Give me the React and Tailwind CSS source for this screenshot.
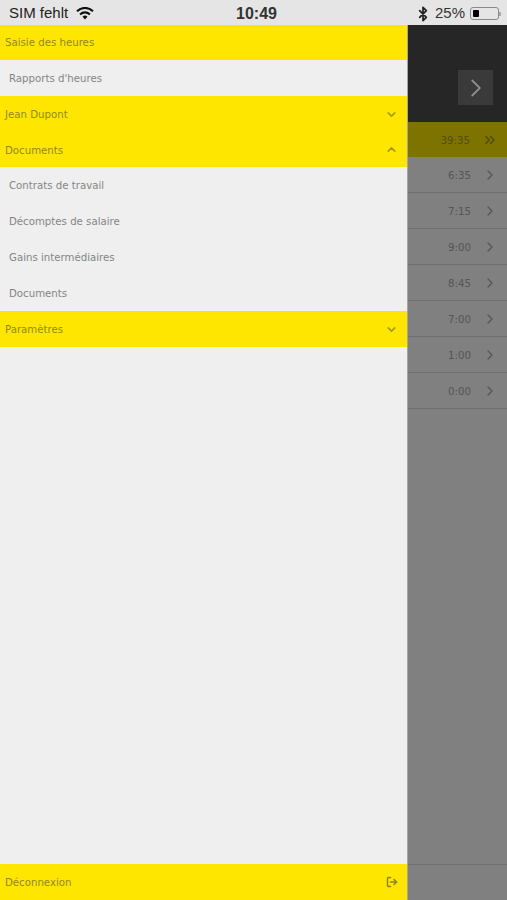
import { Bluetooth, ChevronDown, ChevronRight, ChevronUp, ChevronsRight, LogOut } from 'lucide-react';

const days = ['6:35', '7:15', '9:00', '8:45', '7:00', '1:00', '0:00'];

function MenuHeader({ label, open, closed, height = 'h-9', nudge = 'pt-[2px]' }) {
  return (
    <div className={`${height} flex items-center justify-between bg-[#ffe600] pl-[5px] pr-[9px] text-[#8f8a1e]`}>
      <span className={nudge}>{label}</span>
      {closed && <ChevronDown size={13} strokeWidth={2.8} className="text-[#a39a10]" />}
      {open && <ChevronUp size={13} strokeWidth={2.8} className="text-[#a39a10]" />}
    </div>
  );
}

function MenuItem({ label }) {
  return <div className="h-9 flex items-center pl-[9px] pt-[2px] text-[#858585]">{label}</div>;
}

function WifiIcon() {
  return (
    <svg width="18" height="13" viewBox="0 0 18 13" className="ml-[8px]">
      <path d="M9 12.6 6.5 9.8a3.6 3.6 0 0 1 5 0Z" fill="#111" />
      <path d="M4.1 7.4a7 7 0 0 1 9.8 0" fill="none" stroke="#111" strokeWidth="2.1" />
      <path d="M1 4.2a11.4 11.4 0 0 1 16 0" fill="none" stroke="#111" strokeWidth="2.1" />
    </svg>
  );
}

export default function App() {
  return (
    <div className="w-[507px] h-[900px] flex flex-col overflow-hidden font-['DejaVu_Sans',sans-serif] text-[10.2px] bg-[#808080]">
      {/* Status bar */}
      <div className="h-[25px] shrink-0 bg-[#e5e5e5] flex items-center justify-between pl-[9px] pr-[6px] pt-[2px] font-['Liberation_Sans',sans-serif] text-[15px] text-[#222] relative">
        <div className="flex items-center">
          <span>SIM fehlt</span>
          <WifiIcon />
        </div>
        <span className="absolute left-[236px] top-[4px] font-bold text-[16px] leading-[20px] text-[#333]">10:49</span>
        <div className="flex items-center">
          <Bluetooth size={16} strokeWidth={2.6} className="mr-[4px]" />
          <span className="mr-[5px] text-[#333]">25%</span>
          <div className="w-[29px] h-[13px] rounded-[3px] border border-[#8a8a8a] p-[2px]">
            <div className="w-[6px] h-full rounded-[1px] bg-black" />
          </div>
          <div className="w-[2px] h-[4px] bg-[#aaa]" />
        </div>
      </div>

      <div className="flex-1 flex min-h-0">
        {/* Drawer */}
        <div className="w-[407px] shrink-0 flex flex-col bg-[#efefef]">
          <MenuHeader label="Saisie des heures" height="h-[35px]" nudge="pt-0" />
          <MenuItem label="Rapports d'heures" />
          <MenuHeader label="Jean Dupont" closed />
          <MenuHeader label="Documents" open height="h-[35px]" />
          <MenuItem label="Contrats de travail" />
          <MenuItem label="Décomptes de salaire" />
          <MenuItem label="Gains intermédiaires" />
          <MenuItem label="Documents" />
          <MenuHeader label="Paramètres" closed />
          <div className="flex-1" />
          <div className="h-9 flex items-center justify-between bg-[#ffe600] pl-[5px] pr-[9px] text-[#8f8a1e]">
            <span className="pt-[2px]">Déconnexion</span>
            <LogOut size={12} strokeWidth={3} className="text-[#8a8320]" />
          </div>
        </div>

        {/* Dimmed page behind the drawer */}
        <div className="flex-1 flex flex-col border-l border-[#a5a5a5] text-[#555555]">
          <div className="h-[97px] shrink-0 bg-[#262626] flex items-end justify-end pr-[14px] pb-[17px]">
            <div className="w-[35px] h-[35px] bg-[#3a3a3a] flex items-center justify-center">
              <ChevronRight size={30} strokeWidth={1.5} className="text-[#8c8c8c]" />
            </div>
          </div>
          <div className="h-[35px] shrink-0 bg-[#7f7300] flex items-center justify-end pr-[9px] text-[#544e10]">
            <span className="pt-[2px]">39:35</span>
            <ChevronsRight size={16} strokeWidth={2.4} className="ml-[12px]" />
          </div>
          {days.map((d) => (
            <div key={d} className="h-9 shrink-0 border-b border-[#6f6f6f] flex items-center justify-end pr-[9px]">
              <span className="pt-[2px]">{d}</span>
              <ChevronRight size={16} strokeWidth={2} className="ml-[11px]" />
            </div>
          ))}
          <div className="flex-1" />
          <div className="h-9 shrink-0 border-t border-[#707070]" />
        </div>
      </div>
    </div>
  );
}
